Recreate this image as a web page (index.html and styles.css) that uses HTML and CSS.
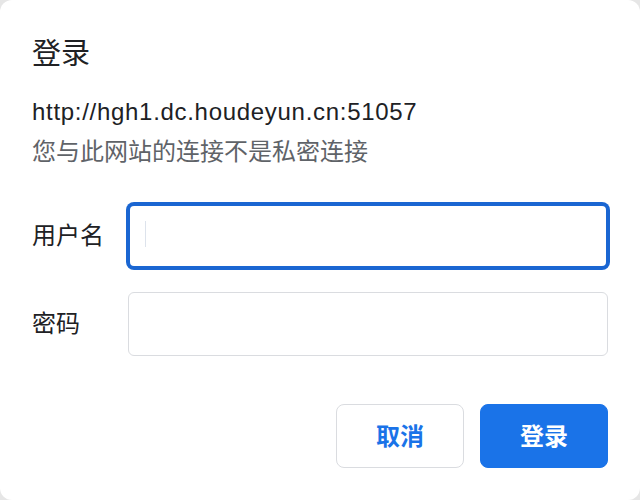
FILE: index.html
```html
<!DOCTYPE html>
<html lang="zh-CN">
<head>
<meta charset="utf-8">
<title>登录</title>
<link rel="stylesheet" href="styles.css">
</head>
<body>
<div class="dialog">
  <h1 class="title">登录</h1>
  <p class="origin">http://hgh1.dc.houdeyun.cn:51057</p>
  <p class="note">您与此网站的连接不是私密连接</p>
  <form class="form">
    <div class="row">
      <label class="label" for="user">用户名</label>
      <span class="field-wrap">
        <input class="field focused" id="user" type="text">
        <span class="caret"></span>
      </span>
    </div>
    <div class="row">
      <label class="label" for="pass">密码</label>
      <span class="field-wrap">
        <input class="field" id="pass" type="password">
      </span>
    </div>
    <div class="actions">
      <button type="button" class="btn btn-cancel">取消</button>
      <button type="button" class="btn btn-primary">登录</button>
    </div>
  </form>
</div>
</body>
</html>
```

FILE: styles.css
```css
html {
  background: #e6e6e6;
}
body {
  margin: 0;
  font-family: "Liberation Sans", "Noto Sans CJK SC", sans-serif;
  color: #202124;
}
.dialog {
  box-sizing: border-box;
  width: 640px;
  height: 500px;
  background: #ffffff;
  border-radius: 12px;
  padding: 36px 32px 0 32px;
}
.title {
  margin: 0 0 20px 0;
  font-size: 29px;
  line-height: 36px;
  font-weight: normal;
  color: #202124;
}
.origin {
  margin: 0;
  font-size: 24px;
  line-height: 40px;
  letter-spacing: 0.7px;
  color: #202124;
}
.note {
  margin: 0;
  font-size: 24px;
  line-height: 40px;
  color: #5f6368;
}
.form {
  margin-top: 32px;
  display: flex;
  flex-direction: column;
  gap: 24px;
}
.row {
  display: grid;
  grid-template-columns: 96px 480px;
  align-items: center;
}
.label {
  font-size: 24px;
  line-height: 32px;
  color: #202124;
}
.field-wrap {
  position: relative;
  display: block;
  height: 64px;
}
.field {
  box-sizing: border-box;
  display: block;
  width: 480px;
  height: 64px;
  margin: 0;
  padding: 0 16px;
  border: 1px solid #dadce0;
  border-radius: 6px;
  background: #ffffff;
  font-family: inherit;
  font-size: 24px;
  outline: none;
}
.field.focused {
  border: 2px solid #1a66d2;
  box-shadow: 0 0 0 2px #1a66d2;
  border-radius: 6px;
}
.caret {
  position: absolute;
  left: 17px;
  top: 17px;
  width: 1px;
  height: 26px;
  background: #dde3ec;
}
.actions {
  margin-top: 24px;
  display: flex;
  justify-content: flex-end;
  gap: 16px;
}
.btn {
  box-sizing: border-box;
  width: 128px;
  height: 64px;
  padding: 0 0 4px 0;
  border-radius: 8px;
  font-family: inherit;
  font-size: 24px;
  font-weight: bold;
  cursor: pointer;
}
.btn-cancel {
  background: #ffffff;
  border: 1px solid #dadce0;
  color: #1a73e8;
}
.btn-primary {
  background: #1a73e8;
  border: 1px solid #1a73e8;
  color: #ffffff;
}
```
